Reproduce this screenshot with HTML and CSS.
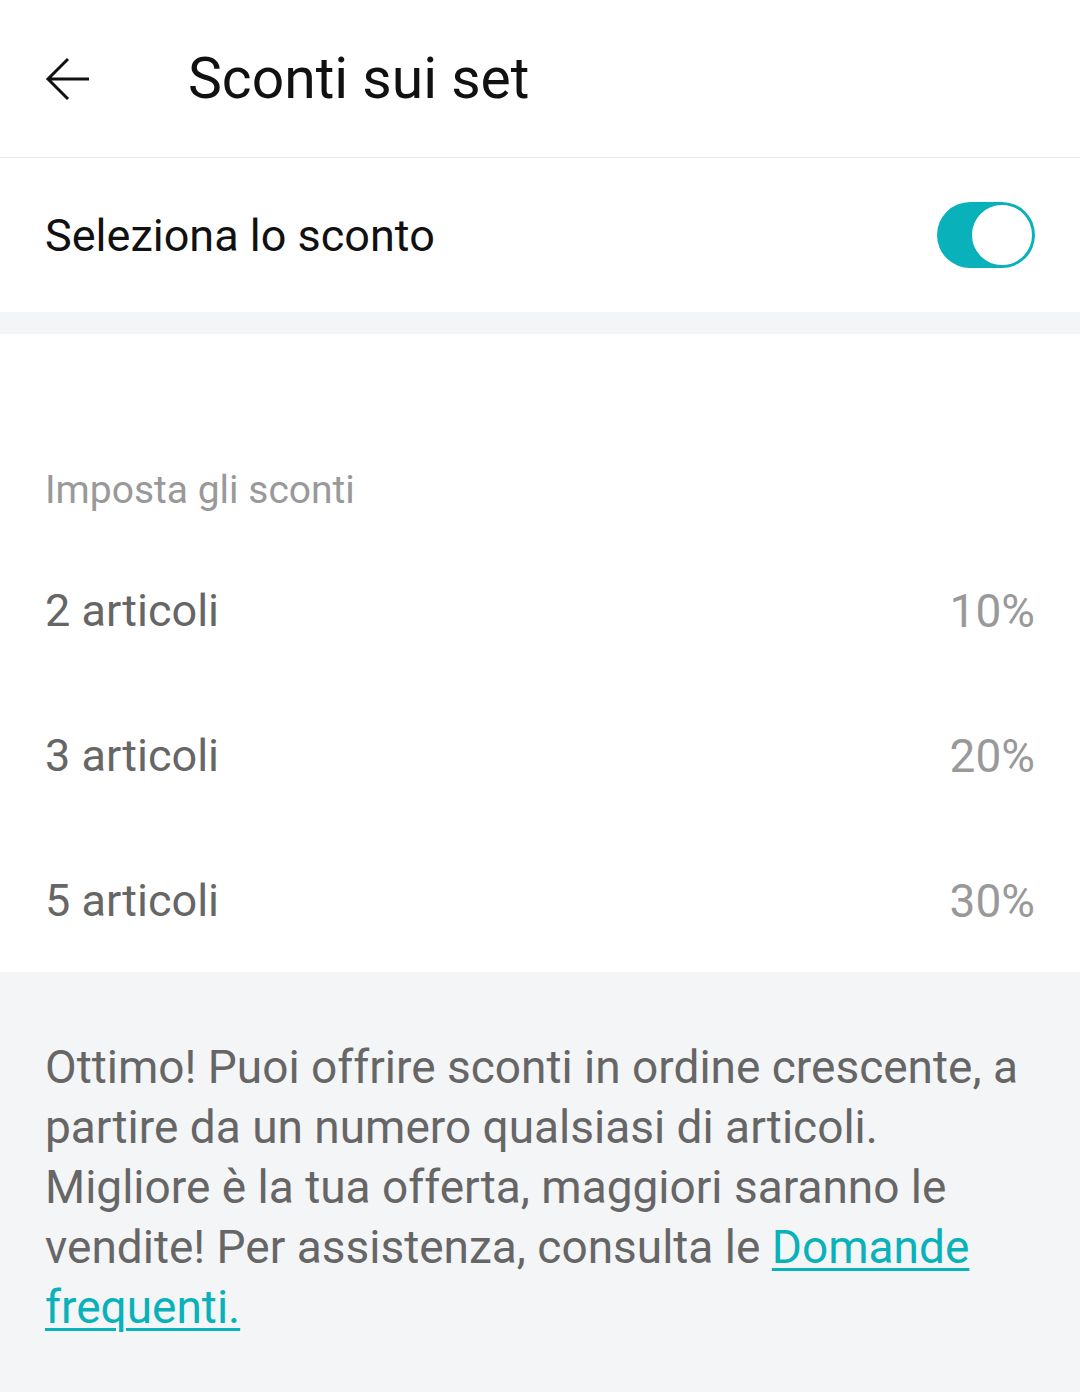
FILE: index.html
```html
<!DOCTYPE html>
<html lang="it">
<head>
  <meta charset="UTF-8">
  <meta name="viewport" content="width=device-width, initial-scale=1.0">
  <title>Sconti sui set</title>
  <link rel="stylesheet" href="styles.css">
</head>
<body>
  <header class="topbar">
    <svg class="back" width="48" height="48" viewBox="0 0 48 48">
      <path d="M44 24H3M23 4L3 24l20 20" fill="none" stroke="#111" stroke-width="3"/>
    </svg>
    <h1>Sconti sui set</h1>
  </header>

  <div class="toggle-row">
    <span>Seleziona lo sconto</span>
    <div class="switch"><div class="knob"></div></div>
  </div>

  <div class="spacer"></div>

  <section class="discounts">
    <h4>Imposta gli sconti</h4>
    <div class="row"><span>2 articoli</span><span class="pct">10%</span></div>
    <div class="row"><span>3 articoli</span><span class="pct">20%</span></div>
    <div class="row"><span>5 articoli</span><span class="pct">30%</span></div>
  </section>

  <p class="note">Ottimo! Puoi offrire sconti in ordine crescente, a partire da un numero qualsiasi di articoli. Migliore è la tua offerta, maggiori saranno le vendite! Per assistenza, consulta le <a href="#">Domande frequenti.</a></p>
</body>
</html>
```

FILE: styles.css
```css
body {
    font-family: Roboto, "Liberation Sans", sans-serif;
    margin: 0;
    padding: 0;
    background-color: #f4f5f7;
    width: 1080px;
    height: 1392px;
    overflow: hidden;
}

.topbar {
    display: flex;
    align-items: center;
    height: 157px;
    padding: 0 45px;
    background: #fff;
    border-bottom: 1px solid #e8e8e8;
}

.back {
    flex: none;
}

h1 {
    margin: 0 0 0 95px;
    font-size: 57px;
    font-weight: 400;
    color: #111;
}

.toggle-row {
    display: flex;
    align-items: center;
    justify-content: space-between;
    height: 154px;
    padding: 0 45px;
    background: #fff;
    font-size: 45px;
    color: #111;
}

.switch {
    width: 98px;
    height: 66px;
    border-radius: 33px;
    background: #09b1ba;
    display: flex;
    justify-content: flex-end;
    box-sizing: border-box;
    padding: 1px;
}

.knob {
    width: 64px;
    height: 64px;
    border-radius: 50%;
    background: #fff;
    box-sizing: border-box;
    border: 2px solid #09b1ba;
}

.spacer {
    height: 22px;
}

.discounts {
    background: #fff;
    padding: 126px 45px 0;
    height: 638px;
    box-sizing: border-box;
}

h4 {
    margin: 0 0 18px;
    font-size: 39px;
    font-weight: 400;
    color: #999;
    line-height: 60px;
}

.row {
    display: flex;
    justify-content: space-between;
    align-items: center;
    height: 145px;
    font-size: 45px;
    color: #666;
}

.pct {
    color: #999;
    font-size: 46px;
}

.note {
    margin: 0;
    padding: 65px 45px 0;
    font-size: 46px;
    line-height: 60px;
    color: #666;
}

.note a {
    color: #09b1ba;
    text-decoration-thickness: 3px;
    text-underline-offset: 5px;
}
```
